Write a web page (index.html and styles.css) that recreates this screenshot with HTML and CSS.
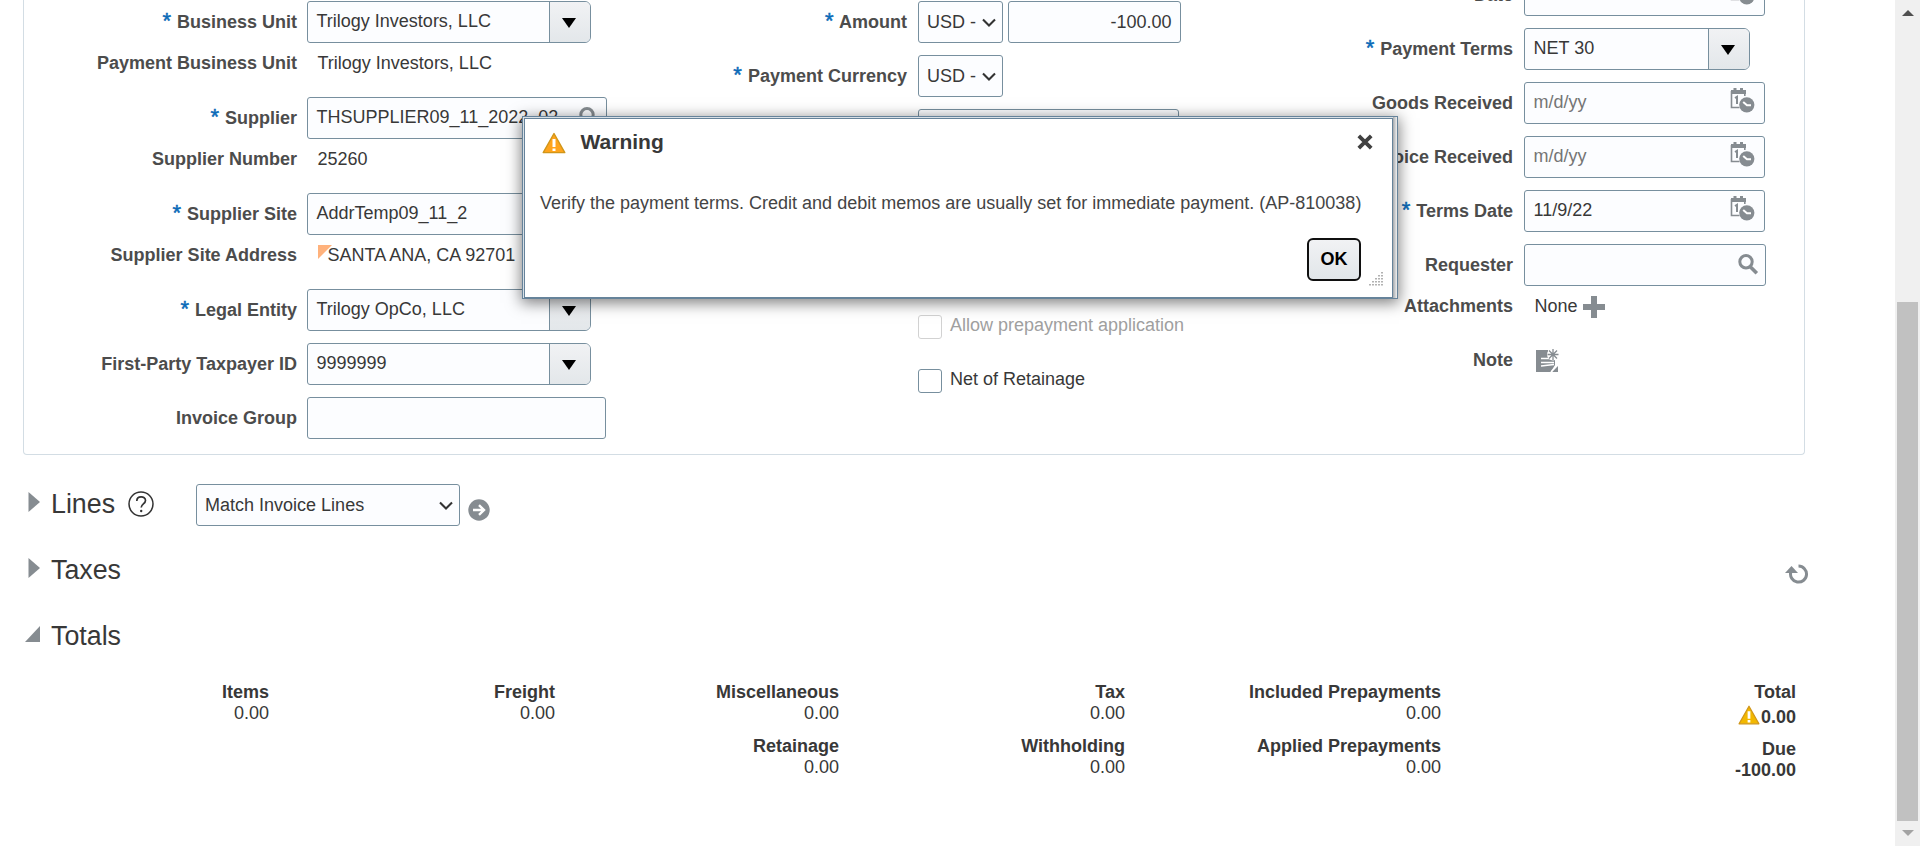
FILE: index.html
```html
<!DOCTYPE html>
<html lang="en">
<head>
<meta charset="utf-8">
<title>Create Invoice</title>
<link rel="stylesheet" href="styles.css">
</head>
<body>
<svg class="defs" width="0" height="0" aria-hidden="true">
  <symbol id="calendar" viewBox="0 0 25 25">
    <path d="M1.5 3v16.5h8M14.8 3v5" fill="none" stroke="#868c91" stroke-width="1.6"/>
    <path d="M1 2h15v4H1zM3.5 0h3v3h-3zM10 0h3v3h-3z" fill="#868c91"/>
    <path d="M5 10l2-1.2V16" fill="none" stroke="#868c91" stroke-width="2"/>
    <circle cx="16.8" cy="16.8" r="7.6" fill="#868c91"/>
    <path d="M13.2 14l3.800 3.200h4" fill="none" stroke="#fff" stroke-width="2"/>
  </symbol>
  <symbol id="search" viewBox="0 0 21 21">
    <circle cx="8" cy="7.8" r="6.2" fill="none" stroke="#868c91" stroke-width="3"/>
    <path d="M12 12.5l6.800 6.800" stroke="#868c91" stroke-width="3.600"/>
  </symbol>
  <symbol id="warn" viewBox="0 0 24 22">
    <path d="M12 1.500L22.800 20.600H1.200z" fill="currentColor" stroke="#d0961a" stroke-width="1.400" stroke-linejoin="round"/>
    <path d="M10.500 7h3v8h-3zM10.500 16.500h3v2.600h-3z" fill="#fff"/>
  </symbol>
  <symbol id="chev" viewBox="0 0 14 10"><path d="M1 1.500l6 6 6-6" fill="none" stroke="#333" stroke-width="2.100"/></symbol>
</svg>

<main class="page">
  <section class="panel">
    <div class="col col-a">
      <div class="row"><label class="label"><b class="star">*</b> Business Unit</label><div class="field combo"><span>Trilogy Investors, LLC</span><i class="drop"></i></div></div>
      <div class="row text"><label class="label">Payment Business Unit</label><span class="plain">Trilogy Investors, LLC</span></div>
      <div class="row"><label class="label"><b class="star">*</b> Supplier</label><div class="field lov supplier"><span>THSUPPLIER09_11_2022_02</span><svg class="lens"><use href="#search"/></svg></div></div>
      <div class="row text"><label class="label">Supplier Number</label><span class="plain">25260</span></div>
      <div class="row"><label class="label"><b class="star">*</b> Supplier Site</label><div class="field combo"><span>AddrTemp09_11_2</span><i class="drop"></i></div></div>
      <div class="row text"><label class="label">Supplier Site Address</label><span class="plain address"><svg class="flag" viewBox="0 0 14 14"><path d="M0 0h14L0 14z" fill="#ffb27c"/></svg>SANTA ANA, CA 92701</span></div>
      <div class="row"><label class="label"><b class="star">*</b> Legal Entity</label><div class="field combo"><span>Trilogy OpCo, LLC</span><i class="drop"></i></div></div>
      <div class="row"><label class="label">First-Party Taxpayer ID</label><div class="field combo"><span>9999999</span><i class="drop"></i></div></div>
      <div class="row"><label class="label">Invoice Group</label><div class="field wide"></div></div>
    </div>

    <div class="col col-b">
      <div class="row"><label class="label"><b class="star">*</b> Amount</label><div class="field currency"><span>USD -</span><svg class="chev"><use href="#chev"/></svg></div><div class="field amount"><span>-100.00</span></div></div>
      <div class="row"><label class="label"><b class="star">*</b> Payment Currency</label><div class="field currency"><span>USD -</span><svg class="chev"><use href="#chev"/></svg></div></div>
      <div class="row covered"><label class="label"></label><div class="field medium"></div></div>
      <div class="row check disabled"><i class="box"></i><span>Allow prepayment application</span></div>
      <div class="row check"><i class="box"></i><span>Net of Retainage</span></div>
    </div>

    <div class="col col-c">
      <div class="row"><label class="label">Date</label><div class="field date"><svg class="cal"><use href="#calendar"/></svg></div></div>
      <div class="row"><label class="label"><b class="star">*</b> Payment Terms</label><div class="field combo terms"><span>NET 30</span><i class="drop"></i></div></div>
      <div class="row"><label class="label">Goods Received</label><div class="field date hint"><span>m/d/yy</span><svg class="cal"><use href="#calendar"/></svg></div></div>
      <div class="row"><label class="label">Invoice Received</label><div class="field date hint"><span>m/d/yy</span><svg class="cal"><use href="#calendar"/></svg></div></div>
      <div class="row"><label class="label"><b class="star">*</b> Terms Date</label><div class="field date"><span>11/9/22</span><svg class="cal"><use href="#calendar"/></svg></div></div>
      <div class="row"><label class="label">Requester</label><div class="field lov requester"><span></span><svg class="lens"><use href="#search"/></svg></div></div>
      <div class="row text attach"><label class="label">Attachments</label><span class="plain">None</span><svg class="plus" viewBox="0 0 22 22"><path d="M8 0h6v8h8v6h-8v8H8v-8H0V8h8z" fill="#868c91"/></svg></div>
      <div class="row text"><label class="label">Note</label><svg class="note" viewBox="0 0 24 24"><path d="M1 1h12v5h7v10l-4 7H1z" fill="#868c91"/><path d="M6 9.500h10M6 13.500h13M6 17l13-1.500" stroke="#fff" stroke-width="1.300"/><circle cx="18" cy="5.500" r="6" fill="#fff"/><path d="M18 0v11M12.500 5.500h11M14 1.500l8 8M22 1.500l-8 8" stroke="#868c91" stroke-width="1.300"/><path d="M23 17v6h-6z" fill="#868c91"/><path d="M16 23l6-7" stroke="#fff" stroke-width="1.500"/></svg></div>
    </div>
  </section>

  <section class="head lines">
    <svg class="tri" viewBox="0 0 15 20"><path d="M3.500 0L15 10 3.500 20z" fill="#868c91"/></svg>
    <h2>Lines</h2>
    <svg class="help" viewBox="0 0 26 26"><circle cx="13" cy="13" r="12" fill="none" stroke="#333" stroke-width="1.500"/><path d="M8.800 10c0-5.600 8.700-5.300 8.700-.6 0 3.400-4.300 3.600-4.300 7.200" fill="none" stroke="#333" stroke-width="1.700"/><circle cx="13.200" cy="20" r="1.200" fill="#333"/></svg>
    <div class="field action"><span>Match Invoice Lines</span><svg class="chev"><use href="#chev"/></svg></div>
    <svg class="go" viewBox="0 0 22 22"><circle cx="11" cy="11" r="10.700" fill="#868c91"/><path d="M5 11h10M11 6.200l5 4.800-5 4.800" fill="none" stroke="#fff" stroke-width="2.400"/></svg>
  </section>
  <section class="head">
    <svg class="tri" viewBox="0 0 15 20"><path d="M3.500 0L15 10 3.500 20z" fill="#868c91"/></svg>
    <h2>Taxes</h2>
    <svg class="refresh" viewBox="0 0 24 20"><path d="M13.500 2.100A8 8 0 1 1 5.800 8" fill="none" stroke="#868c91" stroke-width="3"/><path d="M0 9l6.500-7 6.500 7z" fill="#868c91"/></svg>
  </section>
  <section class="head">
    <svg class="tri open" viewBox="0 0 15 16"><path d="M15 0v16H0z" fill="#868c91"/></svg>
    <h2>Totals</h2>
  </section>

  <section class="totals">
    <div class="sum"><dl><dt>Items</dt><dd>0.00</dd></dl></div>
    <div class="sum"><dl><dt>Freight</dt><dd>0.00</dd></dl></div>
    <div class="sum"><dl><dt>Miscellaneous</dt><dd>0.00</dd></dl><dl><dt>Retainage</dt><dd>0.00</dd></dl></div>
    <div class="sum"><dl><dt>Tax</dt><dd>0.00</dd></dl><dl><dt>Withholding</dt><dd>0.00</dd></dl></div>
    <div class="sum"><dl><dt>Included Prepayments</dt><dd>0.00</dd></dl><dl><dt>Applied Prepayments</dt><dd>0.00</dd></dl></div>
    <div class="sum grand"><dl><dt>Total</dt><dd class="flagged"><svg class="warn"><use href="#warn"/></svg>0.00</dd></dl><dl><dt>Due</dt><dd>-100.00</dd></dl></div>
  </section>
</main>

<aside class="scrollbar">
  <svg class="up" viewBox="0 0 12 6"><path d="M6 0l6 6H0z" fill="#505050"/></svg>
  <div class="thumb"></div>
  <svg class="down" viewBox="0 0 12 6"><path d="M0 0h12L6 6z" fill="#a3a3a3"/></svg>
</aside>

<div class="dialog" role="dialog">
  <div class="inner">
    <header class="dialog-head">
      <svg class="warn"><use href="#warn"/></svg>
      <h1>Warning</h1>
      <svg class="close" viewBox="0 0 16 16"><path d="M1.800 1.800l12.400 12.400M14.200 1.800L1.800 14.200" stroke="#404040" stroke-width="3.800"/></svg>
    </header>
    <p>Verify the payment terms. Credit and debit memos are usually set for immediate payment. (AP-810038)</p>
    <footer class="dialog-foot">
      <button class="ok">OK</button>
      <svg class="grip" viewBox="0 0 15 15"><path d="M13 1v14M10 4v11M7 7v8M4 10v5M1 13v2" stroke="#999" stroke-width="1.500" stroke-dasharray="1.500 1.500"/></svg>
    </footer>
  </div>
</div>
</body>
</html>
```
FILE: styles.css
```css
* { box-sizing: border-box; }
html, body { height: 100%; }
body {
  margin: 0;
  overflow: hidden;
  display: flex;
  background: #fff;
  color: #383838;
  font: 18px/20px "Liberation Sans", Arial, sans-serif;
}
.defs { position: absolute; }
.page { flex: 1; height: 846px; overflow: hidden; padding: 0 90px 0 23px; }

/* Invoice header */
.panel {
  display: grid;
  grid-template-columns: 611px 606px 1fr;
  height: 455px;
  border: 1px solid #d3dde4;
  border-top: 0;
  border-radius: 0 0 4px 4px;
}
.col { display: flex; flex-direction: column; gap: 12px; padding-top: 1px; }
.col-c { margin-top: -27px; }
.row { display: flex; height: 42px; flex: none; }
.row.text { height: 30px; }
.label {
  width: 273px;
  flex: none;
  margin-right: 10px;
  padding-top: 11px;
  text-align: right;
  font-weight: bold;
  color: #4c4c4c;
  white-space: nowrap;
}
.col-b .label { width: 272px; margin-right: 11px; }
.col-c .label { width: 272px; margin-right: 11px; }
.row.text .label { padding-top: 0; margin-top: -2px; }
.plain { margin: -2px 0 0 10.500px; white-space: nowrap; }
.star { margin-right: 1px; color: #0b6bb8; font-size: 22px; font-weight: normal; line-height: 0; -webkit-text-stroke: .5px #0b6bb8; }
.field {
  display: flex;
  height: 42px;
  border: 1px solid #778f9e;
  border-radius: 3px;
  background: #fcfdff;
  white-space: nowrap;
}
.field > span { flex: 1; padding: 9px 0 0 8.500px; }
.combo { width: 284px; border-radius: 3px 6px 6px 3px; }
.drop {
  display: flex;
  align-items: center;
  justify-content: center;
  width: 41px;
  padding: 2px 3px 0 0;
  border-left: 1px solid #778f9e;
  border-radius: 0 5px 5px 0;
  background: linear-gradient(#f1f2f4, #e3e7ea);
}
.drop::before {
  content: "";
  border: 7px solid transparent;
  border-top: 10px solid #000;
  border-bottom: 0;
}
.terms { width: 226px; }
.wide { width: 299px; }
.supplier { width: 300px; }
.medium { width: 261px; }
.lens { width: 21px; height: 21px; margin: 9px 6px 0 0; }
.address { display: flex; }
.flag { width: 14px; height: 14px; margin-right: -4px; }
.currency { width: 85px; margin-right: 5px; }
.currency > span { padding: 10px 0 0 8px; }
.chev { width: 14px; height: 10px; margin: 16px 6px 0 0; }
.amount { width: 173px; text-align: right; }
.amount > span { padding: 10px 8.500px 0 0; }
.covered { height: 194px; }
.check { height: 42px; padding-left: 283px; }
.box { width: 24px; height: 24px; border: 1px solid #778f9e; border-radius: 3px; background: #fff; }
.check span { padding-left: 8px; }
.disabled { color: #a0a0a0; }
.disabled .box { border-color: #d2d2d2; }
.date { width: 241px; }
.hint { color: #757575; }
.cal { width: 25px; height: 25px; margin: 5px 9px 0 auto; }
.requester { width: 242px; }
.attach { margin-bottom: 12px; }
.plus { width: 22px; height: 22px; margin: -2px 0 0 5px; }
.note { width: 24px; height: 24px; margin: -3px 0 0 11px; }

/* Collapsible sections */
.head { display: flex; height: 66px; padding-top: 18px; }
.lines { height: 84px; padding-top: 36px; }
h2 { margin: -2px 0 0; font-weight: normal; font-size: 26.800px; line-height: 30px; }
.tri { width: 15px; height: 20px; margin: 1px 11px 0 2px; }
.open { height: 16px; margin-top: 3px; }
.help { width: 26px; height: 26px; margin: 0 0 0 13px; }
.action { width: 264px; margin: -7px 8px 0 42px; }
.action > span { padding: 10px 0 0 8px; }
.action .chev { margin-right: 6px; }
.go { width: 22px; height: 22px; margin-top: 8px; }
.refresh { width: 24px; height: 20px; margin: 7px -4px 0 auto; }

/* Totals grid */
.totals {
  display: grid;
  grid-template-columns: 246px 286px 284px 286px 316px 355px;
  padding-top: 11px;
  text-align: right;
}
.sum { display: flex; flex-direction: column; gap: 12px; }
dl { margin: 0; }
dt { font-weight: bold; line-height: 21px; }
dd { margin: 0; line-height: 21px; }
.grand { font-weight: bold; gap: 9px; }
.flagged { display: flex; justify-content: flex-end; height: 27px; padding-top: 4px; }
.warn { width: 24px; height: 22px; color: #ffa41c; }
.flagged .warn { width: 22px; margin: -3px 1px 0 0; color: #f2b800; }

/* Page scrollbar */
.scrollbar {
  display: flex;
  flex-direction: column;
  align-items: center;
  width: 25px;
  padding: 10px 0;
  background: #f0f0f0;
}
.scrollbar svg { width: 12px; height: 6px; }
.thumb { width: 21px; height: 519px; margin: auto 0 9px; background: #c1c1c1; }

/* Message dialog */
.dialog {
  position: absolute;
  left: 522px;
  top: 116px;
  width: 876px;
  height: 183px;
  padding: 1px 4px 0 1px;
  border: 1px solid #66839a;
  background: linear-gradient(90deg, #d9e0e6 870px, #a5a9ad 870px, #f0f0f0);
  box-shadow: 0 3px 14px 1px rgba(0, 0, 0, .5);
}
.inner {
  height: 180px;
  padding: 13px 13px 0 17px;
  border: 1px solid #66839a;
  background: #fff;
}
.dialog-head { display: flex; }
.dialog-head .close { width: 16px; height: 16px; margin: 2px 6px 0 auto; }
h1 { margin: -1px 0 1px 14.500px; font-size: 21px; line-height: 22px; }
.inner p { margin: 39px -10px 0 -2px; color: #444; white-space: nowrap; }
.dialog-foot { display: flex; justify-content: flex-end; margin-top: 25px; }
.ok {
  width: 54px;
  height: 43px;
  padding: 0 0 2px;
  border: 2px solid #101010;
  border-radius: 6px;
  background: linear-gradient(#f1f2f4, #e1e6e9);
  font: bold 18px/20px "Liberation Sans", Arial, sans-serif;
  color: #000;
}
.grip { width: 15px; height: 15px; margin: 33px -5px 0 8px; }
```
